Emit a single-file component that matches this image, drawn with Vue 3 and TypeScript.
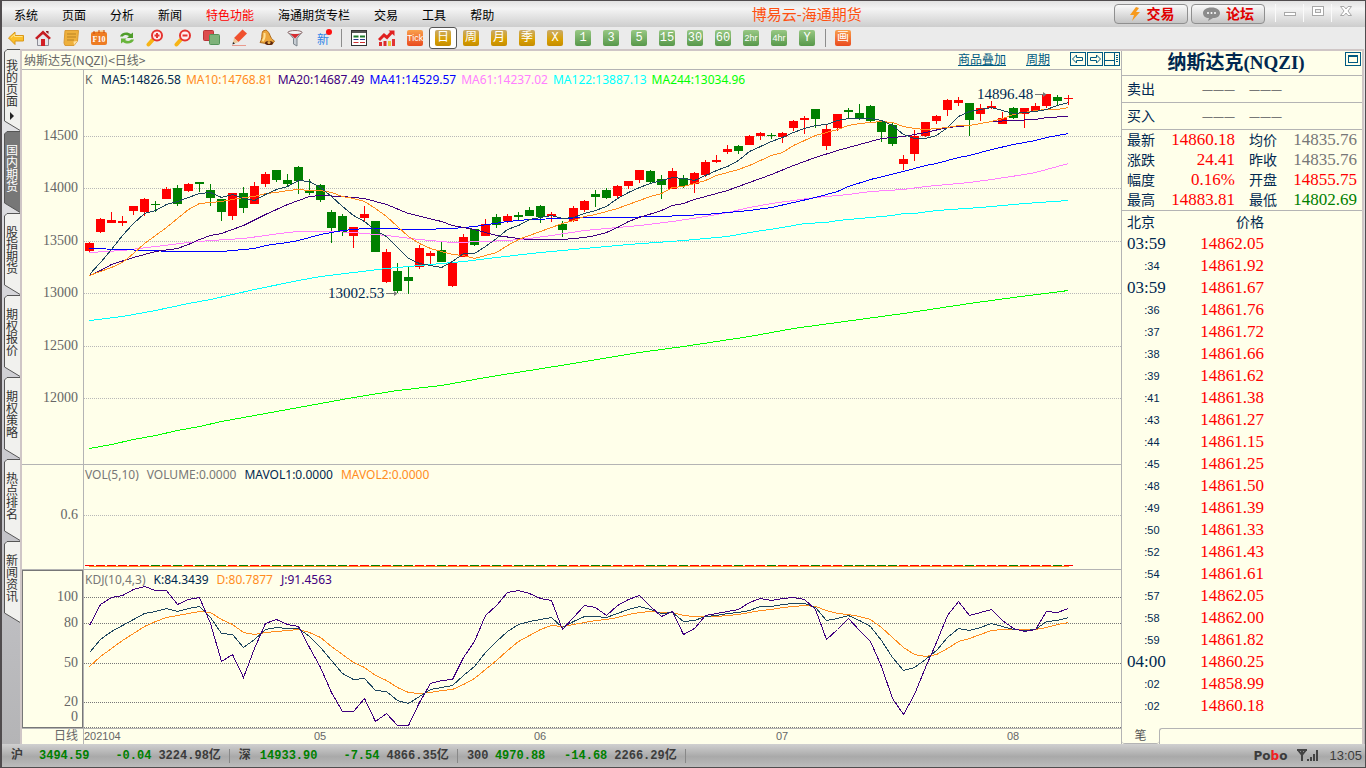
<script setup lang="ts">
interface Candle { x: number; up: boolean; high: number; top: number; bottom: number; low: number }
interface Badge { text: string; tone: string; active?: boolean; small?: boolean }
interface Line { color: string; points: string }

const menu = ['系统', '页面', '分析', '新闻', '特色功能', '海通期货专栏', '交易', '工具', '帮助']
const badges: Badge[] = [
  { text: '日', tone: 'gold', active: true },
  { text: '周', tone: 'gold' },
  { text: '月', tone: 'gold' },
  { text: '季', tone: 'gold' },
  { text: 'X', tone: 'gold' },
  { text: '1', tone: 'green' },
  { text: '3', tone: 'green' },
  { text: '5', tone: 'green' },
  { text: '15', tone: 'green' },
  { text: '30', tone: 'green' },
  { text: '60', tone: 'green' },
  { text: '2hr', tone: 'green', small: true },
  { text: '4hr', tone: 'green', small: true },
  { text: 'Y', tone: 'green' },
]
const sideTabs = ['我的页面', '国内期货', '股指期货', '期权报价', '期权策略', '热点排名', '新闻资讯']

const STEP = 11
const PLOT_W = 1037
const PRICE_H = 394
const VOL_H = 104
const KDJ_H = 158

/* r = rising, g = falling; high, body top, body bottom, low */
const rawCandles = `r172,173,181,182 r148,149,162,163 r142,150,153,153 r146,151,153,156 r136,136,141,145 r128,129,142,146
g131,134,135,142 r117,119,129,129 g115,118,134,136 r113,114,121,122 g112,112,114,122 g114,120,128,136
g129,129,142,151 r123,123,146,150 g117,123,138,143 r112,116,134,134 r102,104,114,117 g100,100,110,112
g104,110,114,116 g96,97,111,124 g109,120,123,125 g114,115,130,132 g140,142,158,173 g144,146,162,166
r157,157,166,178 r136,144,148,151 g151,151,182,182 r179,182,212,213 g193,201,221,223 g197,207,211,224
r175,178,197,199 r181,183,186,196 g172,180,192,192 r192,192,216,217 r164,167,187,187 g159,159,175,176
r149,154,166,166 g144,147,155,158 r144,146,151,153 g142,145,147,151 g137,140,146,146 g135,136,147,153
r142,144,146,152 g151,154,160,167 r136,138,151,152 r130,131,140,142 g120,124,127,137 g118,120,128,129
r115,116,126,129 r111,111,116,119 r100,100,110,113 g100,101,112,114 g105,109,115,129 r98,101,119,119
g105,108,116,118 r102,103,114,123 r90,92,105,107 r85,90,92,93 r75,79,82,84 g75,76,81,84
r65,66,75,75 r62,63,66,70 g63,65,66,69 r62,63,67,73 r50,51,58,61 r46,48,50,64
g39,39,49,58 r55,59,76,80 r44,44,58,61 g38,40,42,48 g34,43,49,50 g35,36,51,52
g51,51,62,72 g53,55,74,76 r85,89,94,100 r60,66,84,91 r52,52,66,67 r45,46,51,54
r29,30,40,46 r27,30,33,36 g33,33,50,66 r34,38,44,51 r31,36,38,39 r42,48,54,54
g37,38,48,49 r38,38,44,58 r33,36,41,42 r24,24,36,38 g25,27,31,35 r25,28,29,35`

const candles: Candle[] = rawCandles.split(/\s+/).map((item, i) => {
  const [high, top, bottom, low] = item.slice(1).split(',').map(Number)
  return { x: 1 + i * STEP, up: item[0] === 'r', high, top, bottom, low }
})

const at = (i: number, y: number): string => `${5.5 + i * STEP},${y + 0.5}`
const dense = (color: string, values: number[]): Line => ({ color, points: values.map((y, i) => at(i, y)).join(' ') })
const sparse = (color: string, pairs: number[][]): Line => ({ color, points: pairs.map(([i, y]) => at(i, y)).join(' ') })

const priceLines: Line[] = [
  sparse('#00ff00', [[0, 378], [2, 374], [4, 369], [6, 365], [8, 360], [10, 356], [12, 351], [14, 347], [17, 341], [21, 333], [24, 327], [28, 320], [32, 315], [36, 307], [40, 300], [44, 293], [50, 282], [54, 276], [57, 271], [60, 266], [64, 258], [70, 249], [74, 243], [80, 233], [84, 227], [89, 220]]),
  sparse('#00ffff', [[0, 250], [3, 246], [6, 240], [9, 233], [11, 229], [15, 219], [19, 210], [21, 206], [24, 202], [27, 198], [31, 194], [34, 191], [37, 187], [41, 182], [45, 178], [49, 174], [54, 170], [58, 166], [60, 162], [63, 157], [65, 153], [67, 152], [68, 150], [73, 145], [74, 143], [75, 143], [77, 140], [81, 137], [85, 133], [89, 130]]),
  sparse('#ff80ff', [[0, 182], [3, 180], [6, 176], [9, 172], [11, 170], [14, 168], [18, 162], [19, 161], [22, 161], [24, 162], [27, 165], [30, 169], [31, 170], [33, 172], [36, 171], [38, 170], [40, 168], [42, 165], [45, 160], [48, 157], [50, 155], [53, 151], [56, 146], [58, 142], [60, 137], [62, 133], [64, 130], [66, 127], [69, 124], [71, 121], [74, 119], [76, 116], [80, 112], [82, 109], [85, 104], [86, 102], [87, 99], [89, 93]]),
  sparse('#0000ff', [[0, 178], [3, 179], [5, 180], [8, 181], [12, 181], [15, 178], [16, 175], [18, 172], [19, 170], [21, 164], [23, 160], [25, 158], [27, 158], [29, 159], [30, 159], [33, 158], [35, 156], [38, 151], [40, 149], [43, 148], [45, 147], [48, 147], [52, 146], [56, 144], [58, 142], [60, 140], [62, 137], [64, 132], [66, 127], [68, 121], [69, 116], [71, 109], [74, 101], [76, 95], [77, 93], [79, 87], [80, 85], [82, 79], [84, 74], [86, 70], [87, 67], [89, 63]]),
  sparse('#400080', [[0, 205], [1, 200], [2, 194], [4, 187], [6, 181], [8, 178], [9, 174], [10, 169], [11, 165], [12, 163], [14, 155], [16, 144], [18, 134], [20, 126], [21, 125], [23, 126], [24, 127], [25, 128], [27, 134], [29, 143], [32, 151], [33, 155], [35, 159], [36, 162], [37, 165], [39, 168], [40, 169], [43, 169], [45, 167], [46, 165], [47, 162], [48, 157], [49, 151], [50, 147], [52, 140], [53, 135], [54, 133], [55, 129], [57, 123], [58, 120], [60, 112], [62, 104], [64, 95], [66, 87], [68, 80], [70, 74], [72, 68], [74, 66], [76, 62], [78, 57], [80, 55], [82, 51], [84, 50], [86, 49], [87, 47], [89, 46]]),
  dense('#ff8c1e', [205, 201, 197, 192, 183, 173, 165, 157, 148, 139, 133, 132, 131, 129, 127, 126, 123, 122, 120, 119, 120, 120, 122, 126, 128, 131, 138, 146, 156, 166, 173, 178, 181, 184, 185, 188, 185, 182, 175, 169, 165, 161, 157, 153, 150, 146, 144, 141, 138, 134, 130, 126, 123, 117, 116, 113, 110, 105, 102, 99, 95, 90, 85, 82, 75, 70, 65, 62, 59, 55, 53, 52, 51, 52, 56, 58, 59, 58, 57, 55, 55, 53, 51, 48, 44, 42, 40, 39, 39, 37]),
  dense('#1e4660', [204, 192, 179, 165, 153, 143, 140, 134, 131, 127, 123, 122, 127, 124, 128, 130, 124, 119, 116, 110, 111, 117, 126, 136, 145, 151, 160, 166, 177, 188, 193, 195, 197, 191, 183, 183, 176, 168, 159, 155, 149, 147, 145, 148, 147, 143, 140, 136, 128, 122, 117, 113, 110, 107, 108, 110, 105, 100, 96, 90, 81, 76, 71, 67, 62, 58, 55, 54, 50, 48, 48, 48, 50, 55, 64, 68, 68, 65, 57, 46, 41, 39, 37, 40, 43, 42, 41, 39, 35, 32]),
]

const kdjLines: Line[] = [
  dense('#ff8c1e', [96, 86, 78, 70, 63, 56, 51, 47, 45, 43, 41, 42, 49, 54, 62, 64, 62, 61, 60, 59, 62, 67, 76, 84, 92, 97, 105, 110, 117, 122, 123, 122, 120, 119, 114, 108, 99, 90, 80, 71, 65, 59, 55, 56, 54, 52, 50, 49, 47, 44, 42, 41, 42, 42, 45, 46, 46, 46, 45, 44, 42, 40, 39, 37, 36, 35, 36, 40, 43, 44, 46, 49, 57, 67, 77, 84, 86, 84, 78, 71, 68, 64, 60, 59, 59, 59, 59, 57, 54, 52]),
  dense('#1e4660', [82, 69, 61, 55, 49, 43, 41, 38, 41, 38, 36, 47, 63, 64, 77, 69, 59, 57, 58, 58, 66, 77, 90, 103, 109, 108, 120, 121, 130, 133, 126, 119, 117, 115, 105, 96, 82, 71, 61, 54, 51, 49, 47, 57, 51, 46, 46, 47, 43, 39, 36, 39, 43, 42, 51, 50, 46, 45, 43, 42, 40, 36, 36, 34, 33, 33, 37, 50, 48, 45, 50, 56, 70, 87, 100, 97, 89, 80, 67, 58, 60, 57, 53, 56, 59, 60, 59, 51, 50, 47]),
  dense('#400080', [55, 34, 27, 25, 19, 16, 20, 20, 34, 29, 27, 53, 91, 84, 107, 78, 53, 49, 54, 56, 77, 97, 122, 141, 141, 128, 151, 143, 155, 155, 132, 113, 110, 109, 87, 71, 45, 35, 22, 20, 23, 28, 30, 59, 47, 35, 37, 45, 35, 29, 25, 36, 46, 41, 64, 58, 45, 43, 41, 39, 32, 28, 30, 28, 27, 29, 39, 69, 59, 48, 60, 71, 96, 128, 144, 124, 97, 72, 45, 31, 45, 42, 39, 50, 58, 61, 59, 41, 42, 38]),
]

const priceAxis = [
  { label: '14500', y: 66 }, { label: '14000', y: 118 }, { label: '13500', y: 171 },
  { label: '13000', y: 223 }, { label: '12500', y: 276 }, { label: '12000', y: 328 },
]
const kdjAxis = [
  { label: '100', y: 27 }, { label: '80', y: 53 }, { label: '50', y: 93 },
  { label: '20', y: 132 }, { label: '0', y: 147 },
]
const kdjGrid = [27, 53, 93, 132, 157]
const months = [{ label: '05', x: 236 }, { label: '06', x: 456 }, { label: '07', x: 698 }, { label: '08', x: 929 }]
const marks = [{ label: '14896.48', x: 893, y: 24 }, { label: '13002.53', x: 244, y: 223 }]
const pct = (v: number, total: number): string => `${(v / total) * 100}%`

const priceLegend = [
  { text: 'MA5:14826.58', color: '#002850' }, { text: 'MA10:14768.81', color: '#ff8c1e' },
  { text: 'MA20:14687.49', color: '#400080' }, { text: 'MA41:14529.57', color: '#0000ff' },
  { text: 'MA61:14237.02', color: '#ff80ff' }, { text: 'MA122:13887.13', color: '#00ffff' },
  { text: 'MA244:13034.96', color: '#00ff00' },
]

const quotes = [
  { name: '最新', value: '14860.18', tone: 'red' }, { name: '均价', value: '14835.76', tone: 'gray' },
  { name: '涨跌', value: '24.41', tone: 'red' }, { name: '昨收', value: '14835.76', tone: 'gray' },
  { name: '幅度', value: '0.16%', tone: 'red' }, { name: '开盘', value: '14855.75', tone: 'red' },
  { name: '最高', value: '14883.81', tone: 'red' }, { name: '最低', value: '14802.69', tone: 'darkgreen' },
]

const ticks: [string, string][] = [
  ['03:59', '14862.05'], [':34', '14861.92'], ['03:59', '14861.67'], [':36', '14861.76'], [':37', '14861.72'],
  [':38', '14861.66'], [':39', '14861.62'], [':41', '14861.38'], [':43', '14861.27'], [':44', '14861.15'],
  [':45', '14861.25'], [':48', '14861.50'], [':49', '14861.39'], [':50', '14861.33'], [':52', '14861.43'],
  [':54', '14861.61'], [':57', '14862.05'], [':58', '14862.00'], [':59', '14861.82'], ['04:00', '14860.25'],
  [':02', '14858.99'], [':02', '14860.18'],
]

const indices = [
  { name: '沪', price: '3494.59', change: '-0.04', amount: '3224.98亿' },
  { name: '深', price: '14933.90', change: '-7.54', amount: '4866.35亿' },
  { name: '300', price: '4970.88', change: '-14.68', amount: '2266.29亿' },
]
</script>

<template>
  <div class="app">
    <header class="menubar">
      <nav class="menu">
        <button v-for="m in menu" :key="m" type="button" :class="{ hot: m === '特色功能' }">{{ m }}</button>
      </nav>
      <h1 class="brand">博易云-海通期货</h1>
      <div class="right-tools">
        <button type="button" class="pill">
          <svg width="14" height="16" viewBox="0 0 14 16"><path d="M8 1 L2 9 H6 L4 15 L12 6 H8 L11 2 Z" fill="#f79a1c" /></svg>
          交易
        </button>
        <button type="button" class="pill">
          <svg width="19" height="16" viewBox="0 0 19 16"><path d="M9.500 1.500 C4 1.500 1 4 1 7 C1 10 3.500 12 7 12 L6 15 L11 12 C15.500 12 18 10 18 7 C18 4 15 1.500 9.500 1.500 Z" fill="#8b8b8b" /><g fill="#fff"><circle cx="6" cy="7" r="1" /><circle cx="9.500" cy="7" r="1" /><circle cx="13" cy="7" r="1" /></g></svg>
          论坛
        </button>
        <div class="win">
          <button type="button" aria-label="最小化"><svg width="14" height="16" viewBox="0 0 14 16"><rect x="1.500" y="8.500" width="11" height="3" fill="#fff" stroke="#a8a8a8" /></svg></button>
          <button type="button" aria-label="最大化"><svg width="14" height="16" viewBox="0 0 14 16"><rect x="1.500" y="2.500" width="11" height="9" fill="#fff" stroke="#a8a8a8" /><rect x="4.500" y="5.500" width="5" height="3" fill="#eee" stroke="#a8a8a8" /></svg></button>
          <button type="button" aria-label="关闭"><svg width="14" height="16" viewBox="0 0 14 16"><path d="M1.500 2.500 H5 L7 5 L9 2.500 H12.500 L9 7 L12.500 11.500 H9 L7 9 L5 11.500 H1.500 L5 7 Z" fill="#fff" stroke="#a8a8a8" /></svg></button>
        </div>
      </div>
    </header>

    <div class="toolbar">
      <button type="button" aria-label="后退"><svg viewBox="0 0 18 18"><path d="M1.500 9 L8 3 V6.500 H16.500 V12 H8 V15.500 Z" fill="#fbc02a" stroke="#d9981a" /><path d="M4 8.500 L7.500 5.500 V7.500 H15.500" fill="none" stroke="#ffe48a" /></svg></button>
      <button type="button" aria-label="主页"><svg viewBox="0 0 18 18"><path d="M3.500 8 V16.500 H14.500 V8 L9 3 Z" fill="#e6e6ea" stroke="#8d8d97" /><path d="M1 9 L9 1.500 L17 9 L15 10.500 L9 5 L3 10.500 Z" fill="#c61d23" /><path d="M4 7 L9 2.500 L14 7 L9 5 Z" fill="#c61d23" /><path d="M12 2 H14.500 V5 L12 3 Z" fill="#8e2226" /><rect x="7" y="10" width="4" height="7" fill="#d22026" /></svg></button>
      <button type="button" aria-label="笔记"><svg viewBox="0 0 18 18"><path d="M3 1.500 H16.500 L15.500 12 L12 16.500 H3 L2 14 Z" fill="#eeb03c" stroke="#d99a34" /><path d="M5 5 H14 M5 8 H14 M5 11 H12" stroke="#b98224" /><path d="M12 16 L11.500 12.500 L15.500 12" fill="#ffe1a0" /></svg></button>
      <button type="button" aria-label="F10"><svg viewBox="0 0 18 18"><path d="M3 3 L14 1 L15 4 H3 Z" fill="#f5c987" /><rect x="1" y="3" width="16" height="13" rx="2" fill="#ee7c22" /><path d="M4 2 V5 M9 1 V4 M14 1 V4" stroke="#c9460d" /><text x="9" y="13" text-anchor="middle" class="f10">F10</text></svg></button>
      <button type="button" aria-label="刷新"><svg viewBox="0 0 18 18"><path d="M2 7.500 C3 3.500 9 2 13 5 L15 3.500 V9 H9 L11 7 C8 5.500 6 6 5 7.500 Z" fill="#4f9d2b" /><path d="M16 10.500 C15 14.500 9 16 5 13 L3 14.500 V9.500 H8.500 L7 11 C10 12.500 12 12 13 10.500 Z" fill="#69b53c" /></svg></button>
      <button type="button" aria-label="放大"><svg viewBox="0 0 18 18"><path d="M6.500 11 L2.500 15.500" stroke="#f7b415" stroke-width="4" stroke-linecap="round" /><circle cx="11" cy="6.500" r="5" fill="#ffeef0" stroke="#e53330" stroke-width="2" /><path d="M8.500 6.500 H13.500 M11 4 V9" stroke="#e53330" stroke-width="2" /></svg></button>
      <button type="button" aria-label="缩小"><svg viewBox="0 0 18 18"><path d="M6.500 11 L2.500 15.500" stroke="#f7b415" stroke-width="4" stroke-linecap="round" /><circle cx="11" cy="6.500" r="5" fill="#ffeef0" stroke="#e53330" stroke-width="2" /><path d="M8.500 6.500 H13.500" stroke="#e53330" stroke-width="2" /></svg></button>
      <button type="button" aria-label="叠加"><svg viewBox="0 0 18 18"><rect x="1.500" y="1.500" width="10" height="10" rx="1" fill="#dd4c4c" stroke="#b93438" /><rect x="7.500" y="5.500" width="10" height="10" rx="1" fill="#7fb27a" stroke="#54935a" /></svg></button>
      <button type="button" aria-label="画线"><svg viewBox="0 0 18 18"><path d="M2 16.500 H16" stroke="#e99a8d" /><path d="M12.500 0.500 L17 4.500 L8.500 13 L4 9 Z" fill="#f0512f" /><path d="M4 9 L8.500 13 L2.500 15.500 Z" fill="#ecc99c" /><path d="M2.500 15.500 L3 13 L5 14.500 Z" fill="#222" /></svg></button>
      <button type="button" aria-label="预警"><svg viewBox="0 0 18 18"><path d="M5 2 L8 1 C13 4 11 9 16.500 12 L14 15.500 L2 13.500 C5 9 3 5 5 2 Z" fill="#eda63c" stroke="#b06d1c" /><path d="M6.500 4 C7 8 6.500 10 4.500 12" fill="none" stroke="#ffdf93" stroke-width="2" /><ellipse cx="11" cy="14" rx="4" ry="2" fill="#5b240c" /><circle cx="11" cy="13.500" r="1.500" fill="#e9b04a" /></svg></button>
      <button type="button" aria-label="筛选"><svg viewBox="0 0 18 18"><path d="M2 3 L7.500 9.500 V15 L11 17 V9.500 L16 3 Z" fill="#c6ccd2" stroke="#7c858c" /><ellipse cx="9" cy="3.500" rx="7" ry="2" fill="#f3f3f3" stroke="#8f6a6a" /><path d="M4.500 5 H13.500 L9 9.500 Z" fill="#d62d32" /></svg></button>
      <button type="button" class="new">新<i></i></button>
      <span class="sep"></span>
      <button type="button" aria-label="报价表"><svg viewBox="0 0 18 18"><rect x="1.500" y="1.500" width="15" height="15" fill="#fff" stroke="#333" /><path d="M2 3 H16" stroke="#555" stroke-width="2" /><path d="M3.500 7.500 H8.500 M10 7.500 H15" stroke="#1d7a2c" stroke-width="2" /><path d="M3.500 10.500 H8.500 M10 10.500 H15" stroke="#27348b" /><path d="M3.500 13.500 H8.500 M10 13.500 H15" stroke="#d03030" /></svg></button>
      <button type="button" aria-label="分时图"><svg viewBox="0 0 18 18"><path d="M2.500 17 V13 M7 17 V12" stroke="#dd2b2b" stroke-width="3" /><path d="M11.500 17 V12" stroke="#e8c83a" stroke-width="3" /><path d="M15.500 17 V10" stroke="#e23535" stroke-width="3" /><path d="M1 11 L6 6 L9 8.500 L14 3" fill="none" stroke="#e02020" stroke-width="3" /><path d="M10.500 1.500 H16.500 V7 Z" fill="#e02020" /></svg></button>
      <button type="button"><span class="badge orange tick">Tick</span></button>
      <button v-for="b in badges" :key="b.text" type="button" :class="{ active: b.active }">
        <span class="badge" :class="[b.tone, { small: b.small }]">{{ b.text }}</span>
      </button>
      <span class="sep"></span>
      <button type="button"><span class="badge orange">画</span></button>
    </div>

    <main class="main">
      <nav class="side">
        <button v-for="(t, i) in sideTabs" :key="t" type="button" :class="{ on: i === 1, first: i === 0 }">
          <svg viewBox="0 0 17 82" width="17" height="82"><path d="M17 0.500 H3 L0.500 3 V72 L17 82" /></svg>
          <span>{{ t }}<b v-if="i === 0"></b></span>
        </button>
      </nav>

      <div class="content">
        <section class="charts">
          <div class="chart-head">
            <span class="symbol">纳斯达克(NQZI)&lt;日线&gt;</span>
            <div class="head-links">
              <a href="#">商品叠加</a>
              <a href="#">周期</a>
              <div class="boxes">
                <button type="button" aria-label="向左"><svg width="16" height="14" viewBox="0 0 16 14"><rect x="0.500" y="0.500" width="15" height="13" /><path d="M2.500 7 L6.500 3 V5.500 H12.500 V8.500 H6.500 V11 Z" /></svg></button>
                <button type="button" aria-label="向右"><svg width="16" height="14" viewBox="0 0 16 14"><rect x="0.500" y="0.500" width="15" height="13" /><path d="M13.500 7 L9.500 3 V5.500 H3.500 V8.500 H9.500 V11 Z" /></svg></button>
                <button type="button" aria-label="布局"><svg width="16" height="14" viewBox="0 0 16 14"><rect x="0.500" y="0.500" width="15" height="13" /><path d="M10.500 1 V13 M1 8.500 H10 M12 3.500 H14 M12 5.500 H14 M12 7.500 H14 M12 9.500 H14" /></svg></button>
              </div>
            </div>
          </div>

          <div class="pane">
            <div class="axis">
              <span v-for="a in priceAxis" :key="a.label" :style="{ top: pct(a.y, PRICE_H) }">{{ a.label }}</span>
            </div>
            <div class="plot">
              <svg :viewBox="`0 0 ${PLOT_W} ${PRICE_H}`" preserveAspectRatio="none">
                <line v-for="a in priceAxis" :key="a.y" class="grid" x1="0" :x2="PLOT_W" :y1="a.y + 0.5" :y2="a.y + 0.5" />
                <g v-for="c in candles" :key="c.x" :class="c.up ? 'up' : 'down'">
                  <rect :x="c.x + 4" :y="c.high" width="1" :height="c.low - c.high" />
                  <rect :x="c.x" :y="c.top" width="9" :height="c.bottom - c.top" />
                </g>
                <polyline v-for="l in priceLines" :key="l.color" :points="l.points" :stroke="l.color" />
              </svg>
              <div class="legend">
                <span class="k">K</span>
                <span v-for="l in priceLegend" :key="l.text" :style="{ color: l.color }">{{ l.text }}</span>
              </div>
              <div v-for="m in marks" :key="m.label" class="mark" :style="{ left: pct(m.x, PLOT_W), top: pct(m.y, PRICE_H) }">
                {{ m.label }}
                <svg width="13" height="7" viewBox="0 0 13 7"><path d="M1 3.500 H12" stroke="#777" /><path d="M9 1 L12.500 3.500 L9 6 Z" fill="#777" /></svg>
              </div>
            </div>
          </div>

          <div class="pane">
            <div class="axis"><span :style="{ top: pct(50, VOL_H) }">0.6</span></div>
            <div class="plot">
              <svg :viewBox="`0 0 ${PLOT_W} ${VOL_H}`" preserveAspectRatio="none">
                <line class="grid" x1="0" :x2="PLOT_W" y1="50.500" y2="50.500" />
                <rect x="5" y="101" width="980" height="1" fill="#ff8c1e" />
                <g v-for="c in candles" :key="c.x" :class="c.up ? 'up' : 'down'">
                  <rect :x="c.x" y="100" width="9" height="1" />
                </g>
              </svg>
              <div class="legend wide">
                <span class="muted">VOL(5,10)</span><span class="muted">VOLUME:0.0000</span>
                <span class="navy">MAVOL1:0.0000</span><span class="amber">MAVOL2:0.0000</span>
              </div>
            </div>
          </div>

          <div class="pane">
            <div class="axis boxed">
              <span v-for="a in kdjAxis" :key="a.label" :style="{ top: pct(a.y, KDJ_H) }">{{ a.label }}</span>
            </div>
            <div class="plot">
              <svg :viewBox="`0 0 ${PLOT_W} ${KDJ_H}`" preserveAspectRatio="none">
                <line v-for="y in kdjGrid" :key="y" class="grid dark" x1="0" :x2="PLOT_W" :y1="y + 0.5" :y2="y + 0.5" />
                <polyline v-for="l in kdjLines" :key="l.color" :points="l.points" :stroke="l.color" />
              </svg>
              <div class="legend wide">
                <span class="muted">KDJ(10,4,3)</span><span class="navy">K:84.3439</span>
                <span class="amber">D:80.7877</span><span class="violet">J:91.4563</span>
              </div>
            </div>
          </div>

          <div class="dates">
            <div class="period">日线</div>
            <div class="months">
              <span>202104</span>
              <span v-for="m in months" :key="m.label" class="month" :style="{ left: pct(m.x, PLOT_W) }">{{ m.label }}</span>
            </div>
          </div>
        </section>

        <aside class="panel">
          <div class="panel-title">
            <h2>纳斯达克(NQZI)</h2>
            <button type="button" aria-label="最大化面板"><svg width="16" height="14" viewBox="0 0 16 14"><rect x="0.500" y="0.500" width="15" height="13" /><rect x="3.500" y="3.500" width="9" height="7" /><path d="M3 4.500 H13" /></svg></button>
          </div>
          <div class="side-row"><span>卖出</span><span class="dash">———</span><span class="dash">———</span></div>
          <div class="side-row"><span>买入</span><span class="dash">———</span><span class="dash">———</span></div>
          <dl class="quotes">
            <div v-for="q in quotes" :key="q.name"><dt>{{ q.name }}</dt><dd :class="q.tone">{{ q.value }}</dd></div>
          </dl>
          <div class="ticks">
            <table>
              <thead><tr><th>北京</th><th>价格</th></tr></thead>
              <tbody>
                <tr v-for="(t, i) in ticks" :key="i">
                  <td :class="{ sec: t[0].length === 3 }">{{ t[0] }}</td>
                  <td class="price">{{ t[1] }}</td>
                </tr>
              </tbody>
            </table>
          </div>
          <div class="panel-tabs"><button type="button">笔</button><div></div></div>
        </aside>
      </div>
    </main>

    <footer class="status">
      <div v-for="x in indices" :key="x.name" class="index">
        <span class="name">{{ x.name }}</span>
        <span class="num">{{ x.price }}</span>
        <span class="num change">{{ x.change }}</span>
        <span class="amount">{{ x.amount }}</span>
      </div>
      <div class="status-right">
        <strong>Po<em>b</em>o</strong>
        <svg width="22" height="13" viewBox="0 0 22 13"><path d="M0 1 H10 M1 1 L5 6 L9 1 M5 1 V12" fill="none" stroke="#444" stroke-width="2" /><path d="M11 12 V10 M14 12 V8 M17 12 V5 M20 12 V1" stroke="#444" stroke-width="2" /></svg>
        <time>13:05</time>
      </div>
    </footer>
  </div>
</template>

<style>
body {
  margin: 0;
  overflow: hidden;
}
</style>

<style scoped>
.app {
  --cream: #ffffea;
  --line: #b4b4b4;
  --navy: #002850;
  --teal: #005a82;
  --cjk: "Noto Sans CJK SC", sans-serif;
  --num: "Liberation Serif", "Noto Sans CJK SC", serif;
  box-sizing: border-box;
  height: 100vh;
  display: grid;
  grid-template-rows: 26px 22px minmax(0, 1fr) 23px;
  border: 1px solid #504c4e;
  border-left-width: 2px;
  background: #ebebeb;
  font-family: "Liberation Sans", var(--cjk);
  font-size: 12px;
  color: #000;
}
.app * {
  box-sizing: border-box;
}
button {
  margin: 0;
  padding: 0;
  border: 0;
  background: none;
  font: inherit;
  color: inherit;
}
h1,
h2,
dl,
dd {
  margin: 0;
}

.menubar {
  position: relative;
  display: flex;
  align-items: center;
  justify-content: space-between;
  background: linear-gradient(#e2e2e2, #f4f4f4 30%, #cdcdcd);
}
.menu {
  display: flex;
  gap: 24px;
  padding: 3px 0 0 12px;
  line-height: 18px;
}
.menu .hot {
  color: #f00;
}
.brand {
  position: absolute;
  left: 0;
  right: 0;
  width: max-content;
  margin-left: 55%;
  padding-top: 1px;
  font-size: 15px;
  line-height: 22px;
  font-weight: 400;
  color: #ff5010;
}
.right-tools {
  display: flex;
  align-items: center;
  gap: 3px;
  padding-right: 6px;
}
.pill {
  display: flex;
  align-items: center;
  justify-content: center;
  gap: 5px;
  width: 74px;
  height: 20px;
  border: 1px solid #8f8f8f;
  border-radius: 4px;
  background: linear-gradient(#fafafa, #c4c4c4);
  color: #e00000;
  font-size: 14px;
  line-height: 18px;
  font-weight: 700;
}
.win {
  display: flex;
  align-self: flex-start;
  padding-left: 7px;
}
.win button {
  width: 28px;
  height: 18px;
  border-left: 1px solid #fafafa;
}

.toolbar {
  display: flex;
  align-items: center;
}
.toolbar button {
  display: flex;
  align-items: center;
  justify-content: center;
  width: 28px;
  height: 22px;
}
.toolbar button > svg {
  width: 18px;
  height: 18px;
}
.toolbar button:first-child {
  width: 27px;
}
.toolbar .active {
  border: 1px solid #555;
  border-radius: 3px;
  background: #fff;
}
.f10 {
  font: 700 8px "Liberation Serif", serif;
  fill: #fff;
}
.new {
  position: relative;
  color: #2f86e8;
}
.new i {
  position: absolute;
  top: 2px;
  right: 5px;
  width: 6px;
  height: 6px;
  border-radius: 50%;
  background: #ff1010;
}
.sep {
  width: 8px;
  height: 18px;
  background: linear-gradient(#8d8d8d, #8d8d8d) center / 1px 100% no-repeat;
}
.badge {
  width: 16px;
  height: 16px;
  border-radius: 2px;
  color: #fff;
  font-family: "Liberation Mono", var(--cjk);
  font-size: 12px;
  line-height: 16px;
  text-align: center;
  overflow: hidden;
}
.badge.small,
.badge.tick {
  font-family: "Liberation Sans", sans-serif;
  font-size: 9px;
}
.gold {
  background: linear-gradient(#c9ab6a, #d9a000 60%, #c58c00);
}
.green {
  background: linear-gradient(#98c884, #57984a);
}
.orange {
  background: linear-gradient(#f9a04c, #ea4a1e);
}

.main {
  display: flex;
  min-height: 0;
  padding: 0 1px 0 2px;
  background: linear-gradient(#e8e8ea, #c9c9ce 60%, #b4b4b6);
}
.side {
  display: flex;
  flex-direction: column;
  width: 16px;
  flex: none;
}
.side button {
  position: relative;
  display: flex;
  align-items: flex-start;
  height: 82px;
  flex: none;
  padding: 14px 0 0 2px;
  font-size: 12px;
  line-height: 12px;
  color: #333;
}
.side button.first {
  padding-top: 11px;
}
.side svg {
  position: absolute;
  left: 0;
  top: 0;
  fill: #f1f1ee;
  stroke: #555;
}
.side span {
  position: relative;
  display: block;
  width: 12px;
  word-break: break-all;
}
.side .on {
  color: #fff;
}
.side .on svg {
  fill: #777;
}
.side b {
  display: block;
  margin: 4px 0 0 4px;
  border: 4px solid transparent;
  border-left-color: #222;
  border-right-width: 0;
  width: 0;
}

.content {
  position: relative;
  flex: 1;
  min-width: 0;
  display: grid;
  grid-template-columns: minmax(0, 1fr) 241px;
  border: 2px solid #cfc6c6;
  border-bottom: 0;
  background: var(--cream);
}
.charts {
  display: grid;
  grid-template-rows: 19px minmax(0, 395fr) minmax(0, 105fr) minmax(0, 159fr) 15px;
  min-height: 0;
}
.chart-head {
  display: flex;
  justify-content: space-between;
  padding: 0 1px 0 2px;
  border-bottom: 1px solid var(--line);
  line-height: 18px;
}
.symbol {
  font-family: var(--cjk);
  color: #666;
}
.head-links {
  display: flex;
  align-items: flex-start;
  gap: 20px;
}
.head-links a {
  color: var(--teal);
}
.boxes {
  display: flex;
  gap: 1px;
  padding-top: 1px;
}
.boxes button,
.panel-title button {
  display: flex;
}
.boxes svg,
.panel-title svg {
  fill: none;
  stroke: var(--teal);
}

.pane {
  display: grid;
  grid-template-columns: 62px minmax(0, 1fr);
  border-bottom: 1px solid var(--line);
}
.axis {
  position: relative;
  border-right: 1px solid var(--line);
  font-family: var(--num);
  font-size: 14px;
  line-height: 16px;
  color: #666;
}
.axis span {
  position: absolute;
  right: 5px;
  margin-top: -8px;
}
.boxed {
  box-shadow: inset 0 0 0 1px #777;
}
.plot {
  position: relative;
}
.plot > svg {
  position: absolute;
  inset: 0;
  width: 100%;
  height: 100%;
  shape-rendering: crispEdges;
}
.grid {
  stroke: #b8b8b8;
  stroke-dasharray: 1 1;
}
.grid.dark {
  stroke: #777;
}
.up {
  fill: #f00;
}
.down {
  fill: #008000;
}
polyline {
  fill: none;
}
.legend {
  position: relative;
  display: flex;
  gap: 5px;
  padding: 1px 0 0 1px;
  font-family: "Noto Sans", sans-serif;
  font-size: 12px;
  line-height: 18px;
}
.legend.wide {
  gap: 8px;
}
.legend .k {
  width: 11px;
  color: #666;
}
.muted {
  color: #777;
}
.navy {
  color: var(--navy);
}
.amber {
  color: #ff8c1e;
}
.violet {
  color: #400080;
}
.mark {
  position: absolute;
  display: flex;
  align-items: center;
  gap: 1px;
  margin-top: -8px;
  font-family: var(--num);
  font-size: 15px;
  line-height: 16px;
  color: var(--navy);
}
.dates {
  display: grid;
  grid-template-columns: 62px minmax(0, 1fr);
  line-height: 14px;
  color: #666;
}
.period {
  padding-right: 5px;
  border-right: 1px solid var(--line);
  text-align: right;
}
.months {
  position: relative;
  font-size: 11px;
}
.month {
  position: absolute;
  transform: translateX(-50%);
}

.panel {
  display: flex;
  flex-direction: column;
  min-height: 0;
  border-left: 1px solid var(--line);
  color: var(--navy);
  font-size: 14px;
}
.panel-title {
  position: relative;
  height: 25px;
  flex: none;
  border-bottom: 1px solid var(--line);
}
.panel-title h2 {
  padding-right: 12px;
  font-family: var(--num);
  font-size: 19px;
  line-height: 24px;
  text-align: center;
}
.panel-title button {
  position: absolute;
  top: 1px;
  right: 1px;
}
.side-row {
  display: grid;
  grid-template-columns: 75px 47px 1fr;
  height: 27px;
  flex: none;
  padding-left: 5px;
  border-bottom: 1px solid var(--line);
  line-height: 26px;
}
.dash {
  font-family: "Noto Sans", sans-serif;
  font-size: 11px;
  color: #777;
}
.quotes {
  display: grid;
  grid-template-columns: 1fr 1fr;
  column-gap: 14px;
  flex: none;
  padding: 0 5px;
  border-bottom: 1px solid var(--line);
  line-height: 20px;
}
.quotes div {
  display: flex;
  justify-content: space-between;
}
.quotes dd {
  font-family: var(--num);
  font-size: 17px;
}
.red {
  color: #f00;
}
.gray {
  color: #777;
}
.darkgreen {
  color: #008000;
}
.ticks {
  flex: 1;
  min-height: 0;
  overflow: hidden;
  padding-left: 5px;
}
.ticks table {
  border-collapse: collapse;
  table-layout: fixed;
  width: 137px;
}
.ticks th,
.ticks td {
  height: 22px;
  padding: 0;
  line-height: 22px;
}
.ticks th {
  font-weight: 400;
  text-align: left;
}
.ticks th + th {
  text-align: right;
}
.ticks td {
  font-family: var(--num);
  font-size: 17px;
}
.ticks .sec {
  padding-right: 36px;
  font-family: "Liberation Sans", sans-serif;
  font-size: 11px;
  text-align: right;
}
.ticks .price {
  color: #f00;
  text-align: right;
}
.panel-tabs {
  display: flex;
  height: 16px;
  flex: none;
  font-size: 12px;
  line-height: 14px;
  color: #555;
}
.panel-tabs button {
  width: 37px;
  border: solid var(--line);
  border-width: 0 0 1px 0;
  border-radius: 0 0 3px 3px;
}
.panel-tabs div {
  flex: 1;
  border: solid var(--line);
  border-width: 1px 0 0 1px;
  border-radius: 3px 0 0 0;
}

.status {
  display: flex;
  align-items: center;
  padding-left: 9px;
  background: linear-gradient(#d0d0d0, #a9a9a9 55%, #bcbcbc);
  font-family: "Liberation Mono", var(--cjk);
  font-weight: 700;
  color: #3c3c3c;
}
.index {
  display: flex;
  align-items: center;
  height: 14px;
  line-height: 14px;
  padding-right: 8px;
  margin-right: 9px;
  border-right: 1px solid #888;
}
.index .name {
  width: 28px;
}
.index:nth-child(2) .name {
  width: 21px;
}
.index .num {
  color: #008000;
}
.index .change {
  width: 62px;
  text-align: right;
}
.index .amount {
  margin-left: 7px;
}
.status-right {
  display: flex;
  align-items: center;
  gap: 10px;
  margin-left: auto;
  padding-right: 3px;
}
.status-right strong {
  font: 700 12px "DejaVu Sans", sans-serif;
}
.status-right em {
  font-style: normal;
  color: #f02020;
}
.status-right time {
  font: 400 13px "Liberation Sans", sans-serif;
}
</style>
